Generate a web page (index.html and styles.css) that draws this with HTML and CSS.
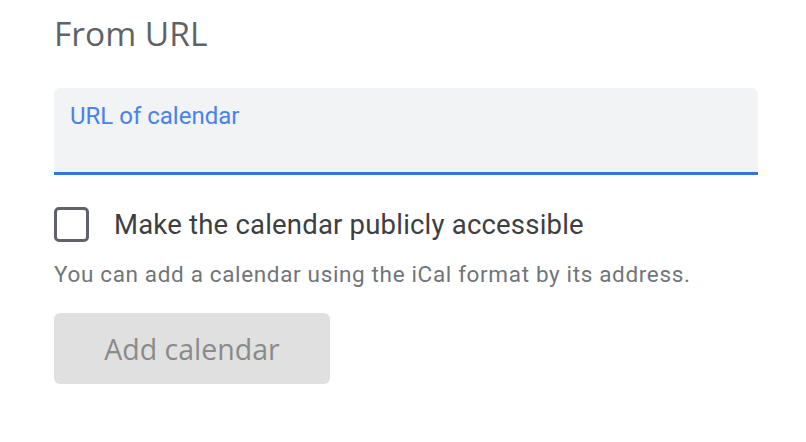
FILE: index.html
```html
<!DOCTYPE html>
<html>
<head>
<meta charset="utf-8">
<link rel="stylesheet" href="styles.css">
</head>
<body>
<main class="panel">
  <h1 class="title">From URL</h1>
  <div class="field">
    <label class="field-label">URL of calendar</label>
  </div>
  <label class="check-row">
    <span class="checkbox"></span>
    <span class="check-text">Make the calendar publicly accessible</span>
  </label>
  <p class="hint">You can add a calendar using the iCal format by its address.</p>
  <button class="add-btn" disabled>Add calendar</button>
</main>
</body>
</html>
```
FILE: styles.css
```css
html, body {
  margin: 0;
  padding: 0;
  background: #ffffff;
}
body {
  font-family: Roboto, "Noto Sans", sans-serif;
  width: 806px;
  height: 442px;
  overflow: hidden;
}
.panel {
  padding: 9px 48px 0 54px;
  display: flex;
  flex-direction: column;
  align-items: flex-start;
}
.title {
  margin: 0;
  font-family: "Open Sans", sans-serif;
  font-weight: 400;
  font-size: 33.5px;
  line-height: 48px;
  color: #5f6368;
}
.field {
  margin-top: 31px;
  align-self: stretch;
  height: 84px;
  background: #f1f3f4;
  border-radius: 6px 6px 0 0;
  border-bottom: 3px solid #3474e0;
  box-sizing: content-box;
  padding: 0 16px;
}
.field-label {
  display: block;
  margin-top: 14px;
  font-size: 24px;
  line-height: 28px;
  color: #4a82ea;
}
.check-row {
  margin-top: 32px;
  display: flex;
  align-items: center;
  gap: 25px;
}
.checkbox {
  width: 29px;
  height: 29px;
  border: 3.5px solid #5f6368;
  border-radius: 5px;
}
.check-text {
  font-size: 27.5px;
  letter-spacing: 0.2px;
  color: #3c4043;
}
.hint {
  margin: 17px 0 0;
  font-size: 22.5px;
  letter-spacing: 0.65px;
  line-height: 30px;
  color: #70757a;
}
.add-btn {
  margin-top: 24px;
  width: 276px;
  height: 71px;
  border: none;
  border-radius: 6px;
  background: #e0e0e0;
  font-family: "Open Sans", sans-serif;
  font-weight: 500;
  font-size: 28.5px;
  color: #8a8a8a;
  padding: 0;
}
```
